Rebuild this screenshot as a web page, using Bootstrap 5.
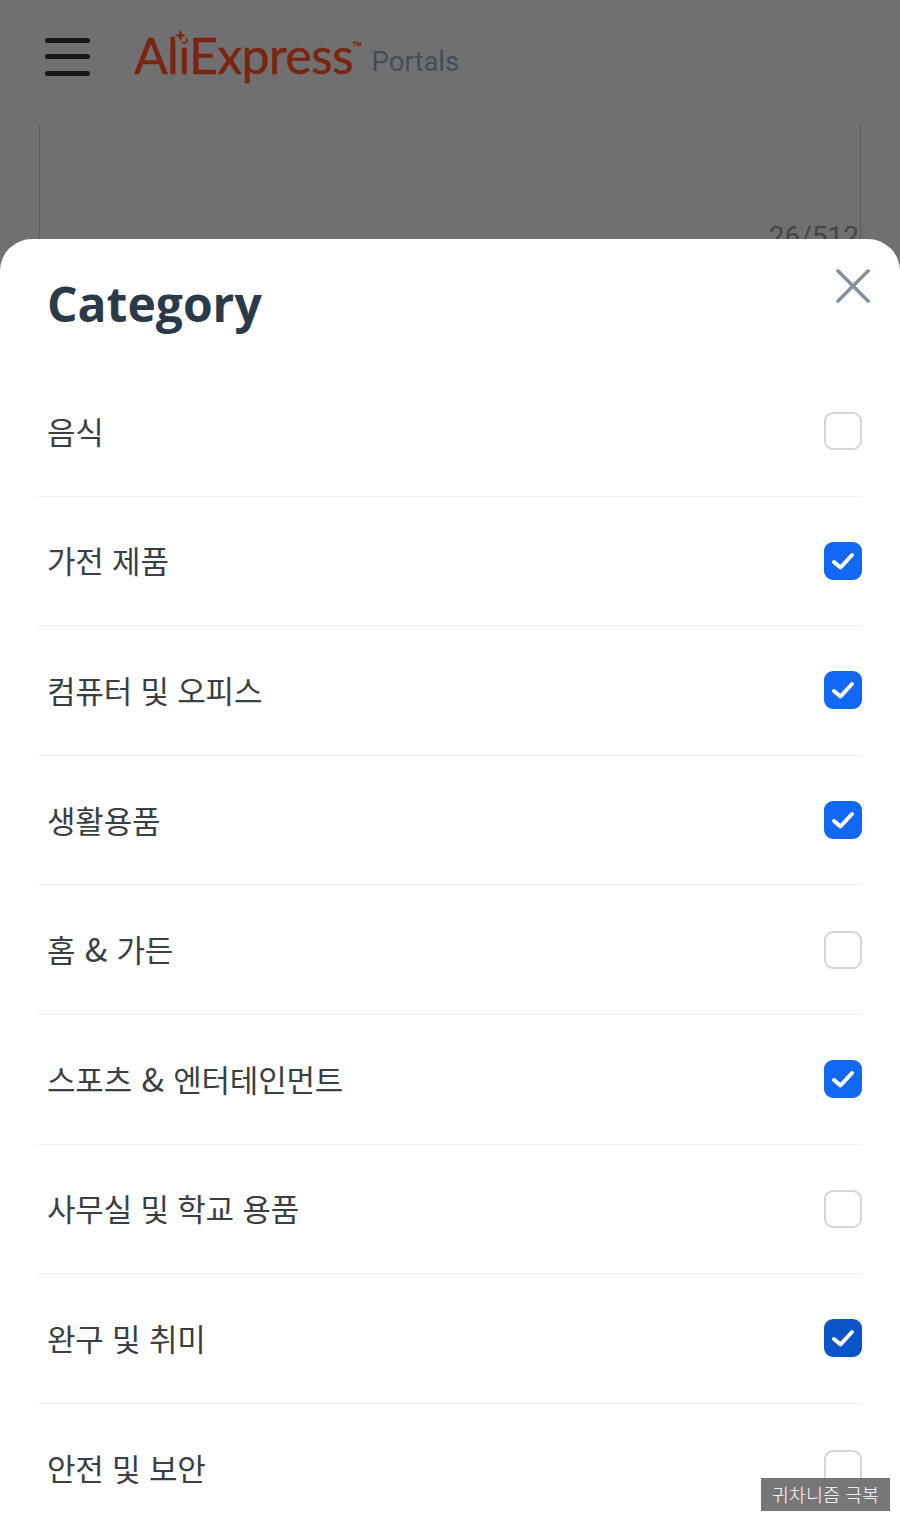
<!DOCTYPE html>
<html lang="ko">
<head>
  <meta charset="UTF-8">
  <title>Category</title>
  <link href="https://cdn.jsdelivr.net/npm/bootstrap@5.3.0/dist/css/bootstrap.min.css" rel="stylesheet">
  <style>
    html, body { height: 1522px; overflow: hidden; background: #707070; }
    .page-top { height: 239px; overflow: hidden; }
    .top-bar { height: 125px; padding-left: 45px; }
    .burger { width: 45px; gap: 11.5px; margin-right: 44px; margin-top: -12px; }
    .burger span { height: 5px; border-radius: 3px; background: #14191e; display: block; }
    .logo-wrap { position: relative; margin-top: -16px; }
    .logo-text { font-family: "Lato", sans-serif; font-size: 50px; line-height: 1; color: #7a2412; letter-spacing: -0.7px; -webkit-text-stroke: 0.4px #7a2412; }
    .logo-tm { font-size: 6px; vertical-align: 28px; letter-spacing: 0; font-family: "Liberation Sans", sans-serif; }
    .logo-star { position: absolute; left: 41px; top: 3px; width: 11px; height: 13px; background: #707070; }
    .logo-sub { font-family: "Roboto", sans-serif; font-size: 27.5px; color: #434d5a; margin-left: 10px; margin-top: 15px; }
    .ghost-field { height: 200px; margin: 0 39px; border-left: 1px solid #5c5c5c; border-right: 1px solid #5c5c5c; padding: 97px 1px 0 0; }
    .ghost-count { font-family: "Roboto", sans-serif; font-size: 28px; color: #454545; line-height: 30px; }
    .sheet { background: #fff; border-radius: 32px 32px 0 0; height: 1283px; overflow: hidden; position: relative; }
    .sheet-head { height: 128px; padding: 34px 47px 0; }
    .sheet-title { font-family: "Open Sans", sans-serif; font-weight: 700; font-size: 48px; line-height: 62px; color: #2b3a48; margin: 0; }
    .sheet-close { position: absolute; top: 30px; right: 30px; width: 34px; height: 34px; background: none; border: 0; padding: 0; }
    .cat-list { margin: 0 38px; }
    .cat-row { height: 129.6px; padding: 0 0 2px 9px; border: 0; border-bottom: 1px solid #eef0f2; border-radius: 0; }
    .cat-row:last-child { border-bottom: 0; }
    .cat-name { font-family: "Noto Sans CJK KR", sans-serif; font-size: 31px; color: #3a3f44; line-height: 1; letter-spacing: -0.2px; }
    .cat-amp { font-size: 33px; margin: 0 1px; }
    .cat-check.form-check-input { width: 38px; height: 38px; margin: 2px 0 0; border: 2px solid #d3d5d8; border-radius: 9px; flex-shrink: 0; }
    .cat-check.form-check-input:checked { background-color: #1268f3; border-color: #1268f3; background-size: 34px 34px; background-position: center;
      background-image: url("data:image/svg+xml,%3csvg xmlns='http://www.w3.org/2000/svg' viewBox='0 0 34 34'%3e%3cpath fill='none' stroke='%23fff' stroke-width='4' stroke-linecap='round' stroke-linejoin='round' d='M8 18l6.5 5.5L26 11'/%3e%3c/svg%3e"); }
    .cat-check.cat-pressed.form-check-input:checked { background-color: #0c55c8; border-color: #0c55c8; }
    .stamp { position: absolute; left: 761px; top: 1478px; width: 129px; height: 33px; background: rgba(100,100,100,.88); color: #fff; font-family: "Noto Sans CJK KR", sans-serif; font-size: 18.5px; font-weight: 300; line-height: 33px; text-align: center; }
  </style>
</head>
<body>

  <div class="page-top">
    <div class="top-bar d-flex align-items-center">
      <div class="burger d-flex flex-column"><span></span><span></span><span></span></div>
      <div class="logo-wrap d-flex align-items-center">
        <span class="logo-text">AliExpress<span class="logo-tm">TM</span></span>
        <svg class="logo-star" viewBox="0 0 11 13"><path fill="#7a2412" d="M5.5 0L6.9 5.1 11 6.5 6.9 7.9 5.5 13 4.1 7.9 0 6.5 4.1 5.1z"/></svg>
        <span class="logo-sub">Portals</span>
      </div>
    </div>
    <div class="ghost-field text-end"><span class="ghost-count">26/512</span></div>
  </div>

  <div class="sheet">
    <div class="sheet-head">
      <h1 class="sheet-title">Category</h1>
      <button class="sheet-close" type="button" aria-label="Close">
        <svg width="34" height="34" viewBox="0 0 34 34"><path fill="none" stroke="#8491a1" stroke-width="3.6" stroke-linecap="round" d="M2 2l30 30M32 2L2 32"/></svg>
      </button>
    </div>
    <div class="list-group cat-list">
      <label class="list-group-item cat-row d-flex align-items-center justify-content-between"><span class="cat-name">음식</span><input class="form-check-input cat-check" type="checkbox"></label>
      <label class="list-group-item cat-row d-flex align-items-center justify-content-between"><span class="cat-name">가전 제품</span><input class="form-check-input cat-check" type="checkbox" checked></label>
      <label class="list-group-item cat-row d-flex align-items-center justify-content-between"><span class="cat-name">컴퓨터 및 오피스</span><input class="form-check-input cat-check" type="checkbox" checked></label>
      <label class="list-group-item cat-row d-flex align-items-center justify-content-between"><span class="cat-name">생활용품</span><input class="form-check-input cat-check" type="checkbox" checked></label>
      <label class="list-group-item cat-row d-flex align-items-center justify-content-between"><span class="cat-name">홈 <span class="cat-amp">&amp;</span> 가든</span><input class="form-check-input cat-check" type="checkbox"></label>
      <label class="list-group-item cat-row d-flex align-items-center justify-content-between"><span class="cat-name">스포츠 <span class="cat-amp">&amp;</span> 엔터테인먼트</span><input class="form-check-input cat-check" type="checkbox" checked></label>
      <label class="list-group-item cat-row d-flex align-items-center justify-content-between"><span class="cat-name">사무실 및 학교 용품</span><input class="form-check-input cat-check" type="checkbox"></label>
      <label class="list-group-item cat-row d-flex align-items-center justify-content-between"><span class="cat-name">완구 및 취미</span><input class="form-check-input cat-check cat-pressed" type="checkbox" checked></label>
      <label class="list-group-item cat-row d-flex align-items-center justify-content-between"><span class="cat-name">안전 및 보안</span><input class="form-check-input cat-check" type="checkbox"></label>
    </div>
  </div>

  <div class="stamp">귀차니즘 극복</div>

  <script src="https://cdn.jsdelivr.net/npm/bootstrap@5.3.0/dist/js/bootstrap.bundle.min.js"></script>
</body>
</html>
